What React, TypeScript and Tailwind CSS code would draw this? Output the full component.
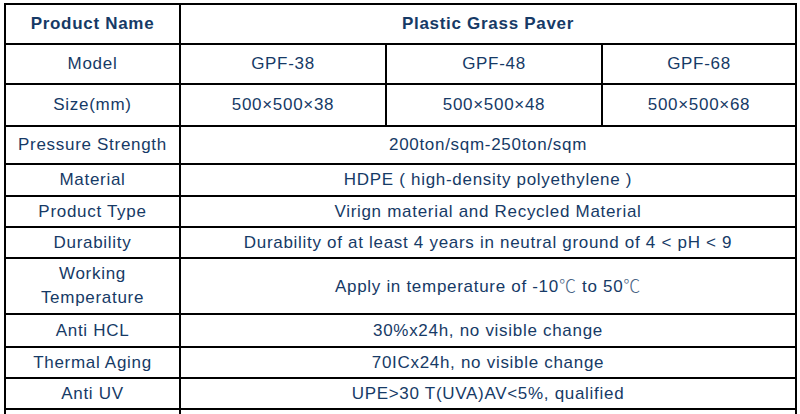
import React from 'react';

// Celsius sign in the wide CJK form, as in the source sheet
const Deg = () => (
  <span className="font-light text-[#4a6585]" style={{ fontFamily: '"Noto Sans CJK SC", sans-serif' }}>
    ℃
  </span>
);

// Spec sheet for the plastic grass paver
const SPEC_ROWS: { label: React.ReactNode; value: React.ReactNode; h: string }[] = [
  { label: 'Pressure Strength', value: '200ton/sqm-250ton/sqm', h: 'h-[38px]' },
  { label: 'Material', value: 'HDPE ( high-density polyethylene )', h: 'h-[32px]' },
  { label: 'Product Type', value: 'Virign material and Recycled Material', h: 'h-[31px]' },
  { label: 'Durability', value: 'Durability of at least 4 years in neutral ground of 4 < pH < 9', h: 'h-[31px]' },
  {
    label: (
      <>
        Working
        <br />
        Temperature
      </>
    ),
    value: (
      <span className="whitespace-pre">
        Apply in temperature of -10<Deg />{' to 50'}<Deg />
      </span>
    ),
    h: 'h-[56px]',
  },
  { label: 'Anti HCL', value: '30%x24h, no visible change', h: 'h-[33px]' },
  { label: 'Thermal Aging', value: '70ICx24h, no visible change', h: 'h-[31px]' },
  { label: 'Anti UV', value: 'UPE>30 T(UVA)AV<5%, qualified', h: 'h-[31px]' },
];

const MODELS = [
  { model: 'GPF-38', size: '500×500×38' },
  { model: 'GPF-48', size: '500×500×48' },
  { model: 'GPF-68', size: '500×500×68' },
];

const cell = 'flex items-center justify-center text-center border-r-2 border-b-2 border-black';

export default function App() {
  return (
    <div
      className="w-[800px] h-[414px] overflow-hidden bg-white text-[17px] leading-[24px] tracking-[0.7px] text-[#163a66]"
      style={{ fontFamily: '"Liberation Sans", Arial, sans-serif' }}
    >
      <div className="ml-[4px] mt-[3px] w-[793px] border-l-2 border-t-2 border-black grid grid-cols-[175px_206px_216px_194px]">
        {/* Header */}
        <div className={`${cell} h-[40px] font-bold`}>Product Name</div>
        <div className={`${cell} col-span-3 h-[40px] font-bold`}>Plastic Grass Paver</div>

        {/* Models */}
        <div className={`${cell} h-[40px]`}>Model</div>
        {MODELS.map((m) => (
          <div key={m.model} className={`${cell} h-[40px]`}>
            {m.model}
          </div>
        ))}

        <div className={`${cell} h-[42px]`}>Size(mm)</div>
        {MODELS.map((m) => (
          <div key={m.size} className={`${cell} h-[42px]`}>
            {m.size}
          </div>
        ))}

        {/* Shared specs */}
        {SPEC_ROWS.map((row, i) => (
          <React.Fragment key={i}>
            <div className={`${cell} ${row.h}`}>{row.label}</div>
            <div className={`${cell} ${row.h} col-span-3`}>{row.value}</div>
          </React.Fragment>
        ))}

        {/* next row, cut off by the page edge */}
        <div className={`${cell} h-[30px]`} />
        <div className={`${cell} h-[30px] col-span-3`} />
      </div>
    </div>
  );
}
